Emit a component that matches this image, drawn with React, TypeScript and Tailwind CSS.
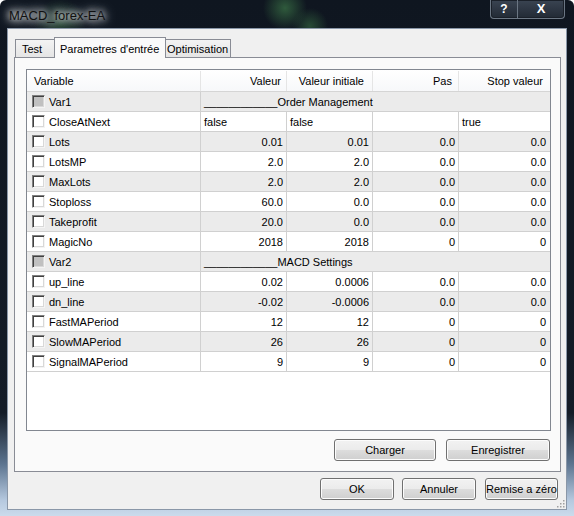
import React from "react";

type Row = {
  name: string;
  group?: string;
  vals?: string[];
  left?: boolean;
};

const rows: Row[] = [
  { name: "Var1", group: "____________Order Management" },
  { name: "CloseAtNext", vals: ["false", "false", "", "true"], left: true },
  { name: "Lots", vals: ["0.01", "0.01", "0.0", "0.0"] },
  { name: "LotsMP", vals: ["2.0", "2.0", "0.0", "0.0"] },
  { name: "MaxLots", vals: ["2.0", "2.0", "0.0", "0.0"] },
  { name: "Stoploss", vals: ["60.0", "0.0", "0.0", "0.0"] },
  { name: "Takeprofit", vals: ["20.0", "0.0", "0.0", "0.0"] },
  { name: "MagicNo", vals: ["2018", "2018", "0", "0"] },
  { name: "Var2", group: "____________MACD Settings" },
  { name: "up_line", vals: ["0.02", "0.0006", "0.0", "0.0"] },
  { name: "dn_line", vals: ["-0.02", "-0.0006", "0.0", "0.0"] },
  { name: "FastMAPeriod", vals: ["12", "12", "0", "0"] },
  { name: "SlowMAPeriod", vals: ["26", "26", "0", "0"] },
  { name: "SignalMAPeriod", vals: ["9", "9", "0", "0"] },
];

// largeurs des colonnes Valeur / Valeur initiale / Pas
const colW = ["w-[86px]", "w-[86px]", "w-[86px]"];

function CheckBox({ gray }: { gray?: boolean }) {
  return (
    <span
      className={`w-[13px] h-[13px] shrink-0 border border-t-[#808080] border-l-[#808080] border-r-[#f4f4f4] border-b-[#f4f4f4] shadow-[inset_1px_1px_0_#404040,inset_-1px_-1px_0_#d8d8d8] ${
        gray ? "bg-[#c0c0c0]" : "bg-white"
      }`}
    />
  );
}

function Button({ label, w }: { label: string; w: string }) {
  return (
    <button
      className={`${w} h-[22px] rounded-[3px] border border-[#707070] bg-[linear-gradient(#f2f2f2_0%,#ebebeb_50%,#dddddd_50%,#cfcfcf_100%)] shadow-[inset_0_0_0_1px_#fcfcfc] text-[11px] text-black flex items-center justify-center pt-px`}
    >
      {label}
    </button>
  );
}

export default function App() {
  return (
    <div className="w-[574px] h-[516px] flex flex-col overflow-hidden rounded-t-[6px] font-['Liberation_Sans',Arial,sans-serif] bg-[linear-gradient(to_bottom,#0f1620_0%,#141c27_80%,#5d7590_90%,#b6c9df_97%,#cbdbec_100%)]">
      {/* barre de titre */}
      <div className="h-[28px] shrink-0 flex items-start bg-[radial-gradient(circle_at_285px_8px,#2f5a3c_0,transparent_22px),radial-gradient(circle_at_60px_24px,#22402f_0,transparent_26px),radial-gradient(circle_at_310px_26px,#274a35_0,transparent_18px)]">
        <span className="ml-[9px] mt-[6px] text-[13px] text-[#111] [text-shadow:0_0_6px_#ffffff,0_0_10px_#e8eef0,0_0_14px_#d0d8dc]">
          MACD_forex-EA
        </span>
        <div className="ml-auto mr-[9px] flex h-[19px] border border-t-0 border-[#6b7683] rounded-b-[4px] bg-[linear-gradient(#3a4452,#222a35)] shadow-[inset_0_0_0_1px_#1a2029]">
          <div className="w-[27px] flex items-center justify-center border-r border-[#6b7683] text-white font-bold text-[12px]">
            ?
          </div>
          <div className="w-[46px] flex items-center justify-center text-white font-bold text-[13px]">
            X
          </div>
        </div>
      </div>

      {/* zone client */}
      <div className="h-[482px] mx-[7px] border border-[#8a97a8] bg-[#f0f0f0] flex flex-col text-[11px] text-black">
        {/* onglets */}
        <div className="mt-[8px] h-[20px] flex items-end pl-[7px]">
          <div className="w-[41px] h-[18px] border border-b-0 border-[#898c95] bg-[linear-gradient(#f3f3f3,#e5e5e5)] flex items-center pl-[6px] pt-[2px]">
            Test
          </div>
          <div className="relative z-10 -mb-px -ml-[2px] w-[112px] h-[21px] border border-b-0 border-[#898c95] bg-[#fafafa] flex items-start pt-[3px] pl-[5px]">
            Parametres d'entrée
          </div>
          <div className="-ml-[1px] w-[66px] h-[18px] border border-b-0 border-l-0 border-[#898c95] bg-[linear-gradient(#f3f3f3,#e5e5e5)] flex items-center pl-[2px] pt-[2px]">
            Optimisation
          </div>
        </div>

        {/* page */}
        <div className="h-[415px] ml-[6px] mr-[5px] border border-[#898c95] bg-[#fafafa] flex flex-col">
          <div className="mt-[11px] ml-[11px] mr-[9px] h-[362px] border border-[#828790] bg-white flex flex-col">
            {/* en-tête */}
            <div className="h-[22px] shrink-0 flex border-b border-[#d5d5d5] bg-[linear-gradient(#ffffff,#f7f8fa)] pt-px">
              <div className="w-[174px] border-r border-[#e5e5e5] flex items-center pl-[7px]">
                Variable
              </div>
              <div className="w-[86px] border-r border-[#e5e5e5] flex items-center justify-end pr-[5px]">
                Valeur
              </div>
              <div className="w-[86px] border-r border-[#e5e5e5] flex items-center justify-end pr-[8px]">
                Valeur initiale
              </div>
              <div className="w-[86px] border-r border-[#e5e5e5] flex items-center justify-end pr-[6px]">
                Pas
              </div>
              <div className="flex-1 flex items-center justify-end pr-[7px]">
                Stop valeur
              </div>
            </div>

            {rows.map((r, i) => (
              <div
                key={r.name}
                className={`h-[20px] shrink-0 flex border-b border-[#d0d0d0] ${
                  i % 2 === 0 ? "bg-[#ebebeb]" : "bg-white"
                }`}
              >
                <div className="w-[174px] border-r border-[#d0d0d0] flex items-center pl-[5px] gap-[4px]">
                  <CheckBox gray={!!r.group} />
                  <span className="pt-px">{r.name}</span>
                </div>
                {r.group ? (
                  <div className="flex-1 flex items-center pl-[3px] pt-px whitespace-pre">
                    {r.group}
                  </div>
                ) : (
                  <>
                    {r.vals!.slice(0, 3).map((v, j) => (
                      <div
                        key={j}
                        className={`${colW[j]} border-r border-[#d0d0d0] flex items-center pt-px ${
                          r.left ? "pl-[3px]" : "justify-end pr-[3px]"
                        }`}
                      >
                        {v}
                      </div>
                    ))}
                    <div
                      className={`flex-1 flex items-center pt-px ${
                        r.left ? "pl-[3px]" : "justify-end pr-[4px]"
                      }`}
                    >
                      {r.vals![3]}
                    </div>
                  </>
                )}
              </div>
            ))}
          </div>

          <div className="mt-[8px] flex justify-end gap-[10px] pr-[10px]">
            <Button label="Charger" w="w-[102px]" />
            <Button label="Enregistrer" w="w-[104px]" />
          </div>
        </div>

        {/* boutons du bas */}
        <div className="mt-[6px] flex justify-end pr-[8px] relative">
          <Button label="OK" w="w-[74px]" />
          <div className="w-[8px]" />
          <Button label="Annuler" w="w-[74px]" />
          <div className="w-[9px]" />
          <Button label="Remise a zéro" w="w-[73px]" />
          {/* poignée de redimensionnement */}
          <svg
            className="absolute right-[1px] top-[22px]"
            width="8"
            height="8"
            viewBox="0 0 8 8"
          >
            {[
              [6, 0],
              [6, 3],
              [3, 3],
              [6, 6],
              [3, 6],
              [0, 6],
            ].map(([x, y], k) => (
              <rect key={k} x={x} y={y} width="1.5" height="1.5" fill="#a0a0a0" />
            ))}
          </svg>
        </div>
      </div>
      <div className="flex-1" />
    </div>
  );
}
